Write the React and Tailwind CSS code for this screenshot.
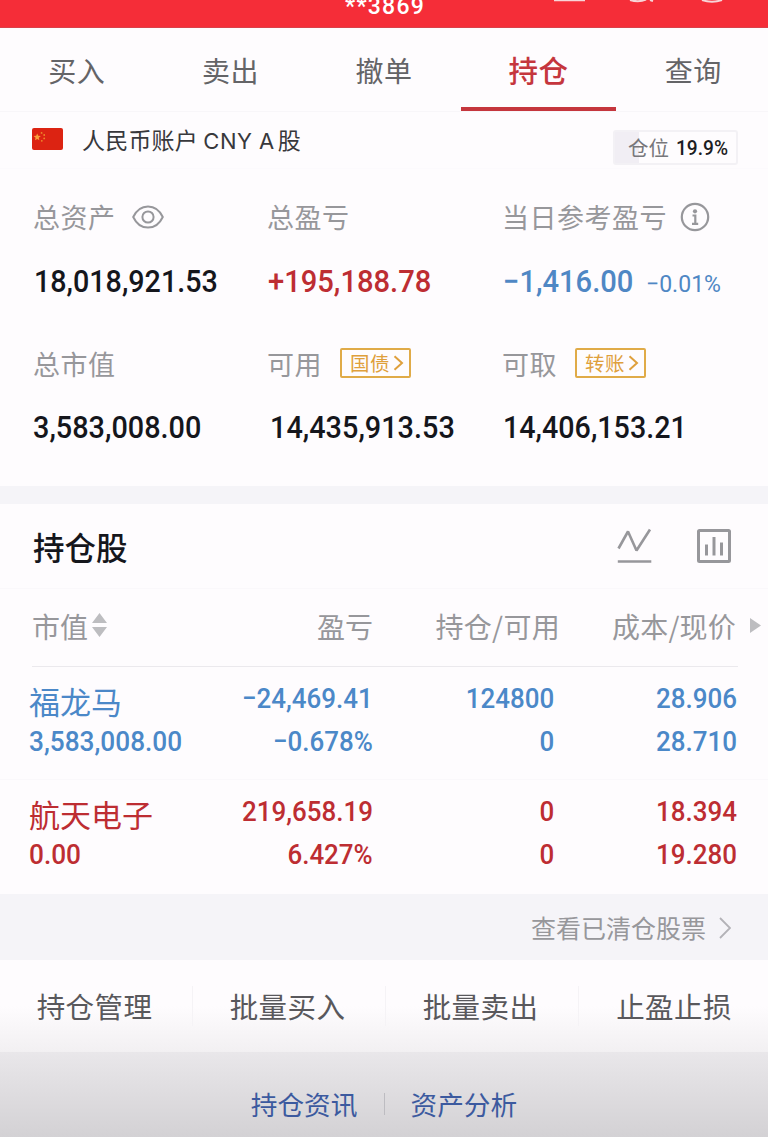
import clsx from "clsx";

const tabs = ["买入", "卖出", "撤单", "持仓", "查询"];
const actions = ["持仓管理", "批量买入", "批量卖出", "止盈止损"];

const holdings = [
  {
    name: "福龙马",
    value: "3,583,008.00",
    profit: "−24,469.41",
    rate: "−0.678%",
    amount: "124800",
    usable: "0",
    cost: "28.906",
    price: "28.710",
    color: "text-[#4b88c8]",
  },
  {
    name: "航天电子",
    value: "0.00",
    profit: "219,658.19",
    rate: "6.427%",
    amount: "0",
    usable: "0",
    cost: "18.394",
    price: "19.280",
    color: "text-[#bd2d32]",
  },
];

// Condensed tabular figures
function Num({ children, right, className }) {
  return (
    <span
      className={clsx(
        "block w-max whitespace-nowrap font-['Roboto','Noto_Sans_CJK_SC',sans-serif]",
        right ? "origin-right" : "origin-left",
        className
      )}
    >
      {children}
    </span>
  );
}

function Flag() {
  return (
    <svg className="h-[22px] w-[31px]" viewBox="0 0 31 22">
      <rect width="31" height="22" rx="2" fill="#dc2312" />
      <path d="M5.2 5.4l1 2.4 2.6.2-2 1.7.6 2.5-2.2-1.3L3 12.2l.6-2.5-2-1.7 2.6-.2z" fill="#f9a03c" />
      <g fill="#ee8a2c">
        <circle cx="9.6" cy="4.9" r=".9" />
        <circle cx="12.2" cy="7" r=".9" />
        <circle cx="12.2" cy="10.4" r=".9" />
        <circle cx="9.8" cy="12.8" r=".9" />
      </g>
    </svg>
  );
}

function EyeIcon() {
  return (
    <svg className="ml-4 h-6 w-8" viewBox="0 0 32 24" fill="none" stroke="#97979b" strokeWidth="2">
      <path d="M1.2 12C4.5 5 10 1.4 16 1.4S27.5 5 30.8 12C27.5 19 22 22.6 16 22.6S4.5 19 1.2 12z" strokeLinejoin="round" />
      <circle cx="16" cy="12" r="5.6" />
    </svg>
  );
}

function InfoIcon() {
  return (
    <svg className="ml-[13px] h-[30px] w-[30px]" viewBox="0 0 30 30" fill="none" stroke="#97979b" strokeWidth="2.2">
      <circle cx="15" cy="15" r="13.2" />
      <circle cx="15" cy="9.3" r="2.1" fill="#97979b" stroke="none" />
      <path d="M12.5 13.5h2.8v8M12 21.8h6.2" />
    </svg>
  );
}

function LinkTag({ children }) {
  return (
    <span className="ml-[18px] mt-[-2px] flex h-[30px] w-[71px] items-center rounded-[2px] border-2 border-[#e0ab48] pl-2 text-[19.5px] leading-none text-[#dfa03c]">
      {children}
      <svg className="ml-[3px] h-4 w-[11px] shrink-0" viewBox="0 0 11 16" fill="none" stroke="currentColor" strokeWidth="2">
        <path d="M1.5 1.2L9 8l-7.500 6.800" />
      </svg>
    </span>
  );
}

function Metric({ label, extra, children }) {
  return (
    <div>
      <div className="flex h-10 items-center text-[27px] tracking-[0.5px] text-[#97979b]">
        <span className="whitespace-nowrap">{label}</span>
        {extra}
      </div>
      <div className="mt-[25px] flex h-10 items-center text-[31px] text-[#15161c]">{children}</div>
    </div>
  );
}

function HoldingRow({ item, last }) {
  return (
    <div
      className={clsx(
        "grid grid-cols-[190px_154px_181px_183px] pl-[29px] pt-4 text-[28.5px]",
        last ? "h-[114px]" : "h-[113px] border-b border-[#faf8fb]",
        item.color
      )}
    >
      <div>
        <div className="mt-[-4px] mb-1 flex h-[43px] items-center text-[31px] leading-none">{item.name}</div>
        <Num className="scale-x-[0.92] font-medium leading-[32px]">{item.value}</Num>
      </div>
      {[
        [item.profit, item.rate],
        [item.amount, item.usable],
        [item.cost, item.price],
      ].map(([top, bottom], i) => (
        <div key={i} className="flex flex-col items-end">
          <Num right className="scale-x-[0.91] font-medium leading-[32px]">{top}</Num>
          <Num right className="mt-[11px] scale-x-[0.91] font-medium leading-[32px]">{bottom}</Num>
        </div>
      ))}
    </div>
  );
}

export default function App() {
  return (
    <div className="h-[1137px] w-[768px] overflow-hidden bg-[#fefcfe] font-['Noto_Sans_CJK_SC',sans-serif]">
      {/* Header */}
      <header className="relative flex h-7 justify-center border-b border-[#d9414a] bg-[#f52d38]">
        <div className="mt-[-7px] h-7 whitespace-nowrap pl-0.5 font-['Roboto','Noto_Sans_CJK_SC',sans-serif] text-[23px] font-medium leading-[28px] tracking-[1.2px] text-white">
          **3869
        </div>
        <svg className="absolute right-0 top-0 h-1 w-[230px]" viewBox="0 0 230 4" fill="none" stroke="#f7d5d8" strokeWidth="2">
          <path d="M16 .3h31M92 0q9 2.5 16-.5M112 0l3 1M164 0q10 3.5 20 0" />
        </svg>
      </header>

      {/* Tabs */}
      <nav className="grid h-[84px] grid-cols-5 border-b border-[#f8f6f9] text-[28px] tracking-[0.5px] text-[#646467]">
        {tabs.map((tab) => (
          <div
            key={tab}
            className={clsx(
              "flex items-center justify-center border-b-4 pt-1",
              tab === "持仓"
                ? "-mr-0.5 border-[#c5363d] text-[29.5px] font-medium text-[#c5363d]"
                : "border-transparent",
              tab === "查询" && "pl-1"
            )}
          >
            {tab}
          </div>
        ))}
      </nav>

      {/* Account */}
      <div className="flex h-[57px] items-start border-b border-[#fcfafd] pl-8 pr-[30px]">
        <div className="mt-4">
          <Flag />
        </div>
        <div className="ml-[19px] mt-[9px] text-[23px] leading-[36px] tracking-[0.2px] text-[#38383c]">
          人民币账户 <span className="font-['Inter',sans-serif] text-[22px] tracking-[0.5px]">CNY A</span>
          <span className="ml-[3px]">股</span>
        </div>
        <div className="ml-auto mt-[18px] flex h-[35px] w-[125px] items-center rounded-[3px] border-2 border-[#f3f1f5] bg-[linear-gradient(90deg,#f1eef4_20%,#fefcfe_20%)] pl-[13px] text-[20.5px] leading-none text-[#77777b]">
          仓位
          <Num className="ml-[7px] mt-0.5 scale-x-[0.91] text-[21px] font-medium text-[#1c1d22]">19.9%</Num>
        </div>
      </div>

      {/* Assets */}
      <section className="grid h-[317px] grid-cols-[234px_235px_1fr] content-start gap-y-[42px] pl-[33px] pt-7">
        <Metric label="总资产" extra={<EyeIcon />}>
          <Num className="ml-px scale-x-[0.925] font-medium">18,018,921.53</Num>
        </Metric>
        <Metric label="总盈亏">
          <Num className="ml-px scale-x-[0.94] font-medium text-[#bd2d32]">+195,188.78</Num>
        </Metric>
        <Metric label="当日参考盈亏" extra={<InfoIcon />}>
          <Num className="ml-px scale-x-[0.94] font-medium text-[#4f87c4]">−1,416.00</Num>
          <Num className="ml-1 mt-1 scale-x-[0.96] text-[24px] text-[#4f87c4]">−0.01%</Num>
        </Metric>
        <Metric label="总市值">
          <Num className="mt-[-2px] scale-x-[0.93] font-medium">3,583,008.00</Num>
        </Metric>
        <Metric label="可用" extra={<LinkTag>国债</LinkTag>}>
          <Num className="ml-[3px] mt-[-2px] scale-x-[0.93] font-medium">14,435,913.53</Num>
        </Metric>
        <Metric label="可取" extra={<LinkTag>转账</LinkTag>}>
          <Num className="ml-px mt-[-2px] scale-x-[0.925] font-medium">14,406,153.21</Num>
        </Metric>
      </section>

      <div className="h-[18px] bg-[#f5f4f8]" />

      {/* Holdings */}
      <div className="flex h-[85px] items-center border-b border-[#faf8fb] pl-[33px] pr-[37px]">
        <h2 className="mt-0.5 text-[31.5px] font-medium text-[#15161c]">持仓股</h2>
        <svg className="ml-auto h-9 w-9" viewBox="0 0 36 36" fill="none" stroke="#97979b" strokeWidth="2.6">
          <path d="M1.5 20.5L11 3.500l8.500 19L33 1.500" strokeLinejoin="bevel" />
          <path d="M.8 33.5h33.500" />
        </svg>
        <svg className="ml-11 h-[34px] w-[34px]" viewBox="0 0 34 34" fill="none" stroke="#97979b" strokeWidth="3">
          <rect x="1.500" y="1.500" width="31" height="31" rx="1" />
          <path d="M9.500 15.500v11M17 8v18.500M24.500 13.500v13" />
        </svg>
      </div>

      <div className="ml-8 mr-[30px] grid h-[78px] grid-cols-[186px_155px_187px_1fr] items-center border-b border-[#ebe9ed] pb-[3px] text-[28px] text-[#97979b]">
        <div className="flex items-center gap-1">
          市值
          <svg className="mt-[-2px] h-6 w-[15px]" viewBox="0 0 15 24" fill="#bdbdc0">
            <path d="M7.500 0L15 10H0zM0 14h15L7.500 24z" />
          </svg>
        </div>
        <div className="text-right">盈亏</div>
        <div className="text-right tracking-[0.3px]">持仓/可用</div>
        <div className="relative whitespace-nowrap pr-0.5 text-right tracking-[0.2px]">
          成本/现价
          <svg className="absolute -right-[23px] top-[13px] h-[15px] w-[11px]" viewBox="0 0 11 15" fill="#bdbdc0">
            <path d="M0 0l11 7.500L0 15z" />
          </svg>
        </div>
      </div>

      {holdings.map((item, i) => (
        <HoldingRow key={item.name} item={item} last={i === holdings.length - 1} />
      ))}

      <div className="flex h-[66px] items-center justify-end bg-[#f5f4f8] pr-[37px] pt-0.5 text-[25px] text-[#97979b]">
        查看已清仓股票
        <svg className="ml-[13px] h-[22px] w-3" viewBox="0 0 12 22" fill="none" stroke="#b3b2b7" strokeWidth="1.8">
          <path d="M1 1l10 10L1 21" />
        </svg>
      </div>

      {/* Batch actions */}
      <div className="flex h-[92px] items-center bg-linear-to-b from-[#fefcfe] from-50% to-[#f2f0f2] text-[28.5px] tracking-[0.4px] text-[#59585c]">
        {actions.map((action, i) => (
          <div
            key={action}
            className={clsx(
              "flex h-10 w-[193px] shrink-0 items-center justify-center pr-[3px]",
              i < 3 && "border-r border-[#f5f3f6]"
            )}
          >
            {action}
          </div>
        ))}
      </div>

      <footer className="flex h-[86px] items-center justify-center bg-linear-to-b from-[#e9e7ea] to-[#d3d1d4] pt-[18px] text-[26.7px] text-[#3c5a9f]">
        <span>持仓资讯</span>
        <span className="mx-[26px] h-[22px] w-px bg-[#bdbcc1]" />
        <span>资产分析</span>
      </footer>
    </div>
  );
}
